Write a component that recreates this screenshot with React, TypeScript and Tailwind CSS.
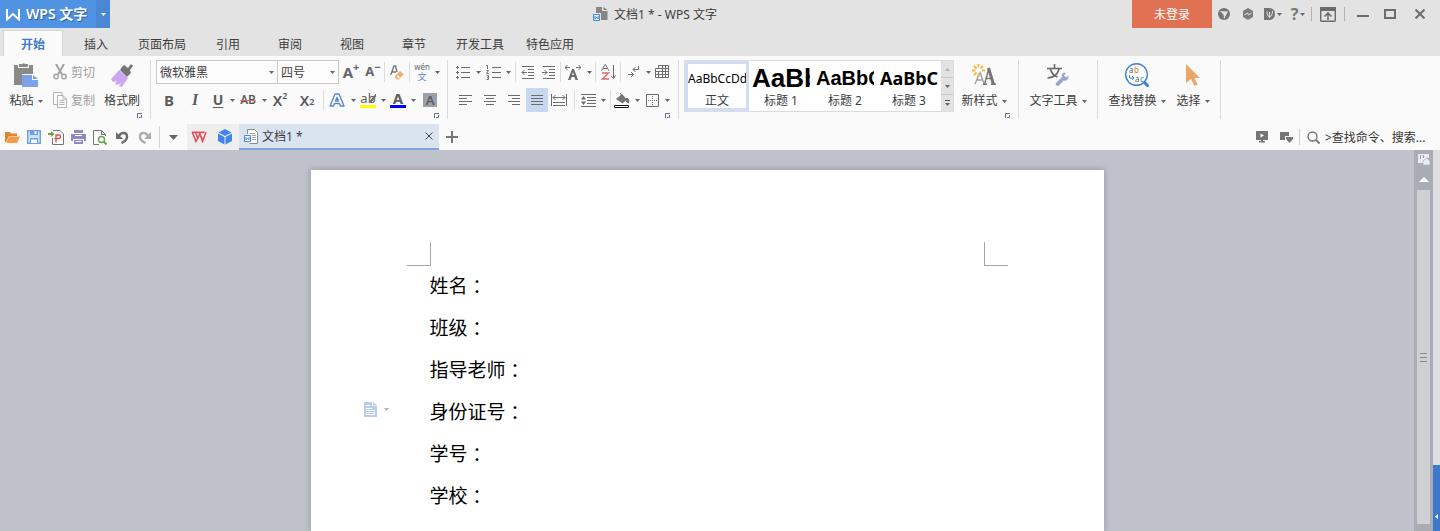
import React from 'react';
import clsx from 'clsx';

type IconProps = { w: number; h: number; children: React.ReactNode };

const Icon: React.FC<IconProps> = ({ w, h, children }) => (
  <svg width={w} height={h} viewBox={`0 0 ${w} ${h}`} fill="none" className="block shrink-0" aria-hidden="true">
    {children}
  </svg>
);

const Caret: React.FC<{ className?: string }> = ({ className = 'text-[#666]' }) => (
  <svg width="5" height="3" viewBox="0 0 5 3" className={clsx('block shrink-0', className)} aria-hidden="true">
    <path d="M0 0h5L2.500 3z" fill="currentColor" />
  </svg>
);

type ToolProps = { label: string; className?: string; children: React.ReactNode };

const Tool: React.FC<ToolProps> = ({ label, className, children }) => (
  <button type="button" aria-label={label} className={clsx('flex h-6 shrink-0 items-center justify-center', className)}>
    {children}
  </button>
);

const Sep: React.FC<{ className?: string }> = ({ className = 'mx-px h-5 bg-[#dcdcdc]' }) => (
  <div className={clsx('w-px shrink-0', className)} />
);

const Launcher: React.FC = () => (
  <div className="flex h-[7px] items-center justify-end pr-2">
    <button type="button" aria-label="更多设置">
      <Icon w={5} h={5}>
        <path d="M.5 5V.5H5M2 4.500h2.500V2" stroke="#69708c" />
      </Icon>
    </button>
  </div>
);

const Group: React.FC<{ className?: string; launcher?: boolean; children: React.ReactNode }> = ({ className, launcher, children }) => (
  <section className={clsx('flex h-[59px] shrink-0 flex-col border-r border-[#dcdcdc]', className)}>
    <div className="h-[52px]">{children}</div>
    {launcher && <Launcher />}
  </section>
);

const BigTool: React.FC<{ label: string; caret?: boolean; className?: string; children: React.ReactNode }> = ({ label, caret, className, children }) => (
  <button type="button" className={clsx('flex h-[52px] shrink-0 flex-col items-center', className)}>
    <span className="flex h-[30px] items-center justify-center">{children}</span>
    <span className="flex h-[22px] items-center gap-1 whitespace-nowrap">
      {label}
      {caret && <Caret />}
    </span>
  </button>
);

/* ---------- title bar ---------- */

const TitleBar: React.FC = () => (
  <header className="flex h-7 items-start">
    <button type="button" className="flex h-7 w-24 items-center gap-1.5 bg-[#5093e2] pl-1.5 font-semibold text-white [text-shadow:1px_1px_1px_#2d62a8]">
      <Icon w={14} h={13}>
        <path d="M1 1v10.500L7 6l6 5.500V1" stroke="#fff" strokeWidth="2" />
      </Icon>
      <span className="text-sm leading-7 whitespace-nowrap">WPS 文字</span>
    </button>
    <button type="button" aria-label="应用菜单" className="flex h-7 w-3.5 items-center justify-center bg-[#4a88d4]">
      <Caret className="text-white" />
    </button>

    <div className="flex h-7 flex-1 items-center justify-center gap-1.5 pl-[68px]">
      <Icon w={15} h={14}>
        <path d="M3 0h6v4h5.500v9H8V6H3z" fill="#868686" />
        <path d="M10.500 0l4 3h-4z" fill="#868686" />
        <path d="M.5 7.500h6v6h-6z" fill="#dfeaf8" stroke="#4a8ad8" />
        <path d="M2 9v3l1.500-2L5 12V9" stroke="#4a8ad8" />
      </Icon>
      <h1 className="pt-0.5 whitespace-nowrap">文档1 * - WPS 文字</h1>
    </div>

    <button type="button" className="h-7 w-20 bg-[#e07253] pt-0.5 text-white">未登录</button>
    <div className="flex h-7 items-center">
      <Tool label="皮肤" className="w-6">
        <Icon w={12} h={12}>
          <circle cx="6" cy="6" r="6" fill="#757575" />
          <path d="M2 3l8 .5-4 7.500-.5-4.500z" fill="#e3e3e4" />
        </Icon>
      </Tool>
      <Tool label="同步" className="w-6">
        <Icon w={12} h={12}>
          <path d="M6 0l5 3v6l-5 3-5-3V3z" fill="#7c7c7c" />
          <path d="M2.500 7l3-2 1 2 3-2" stroke="#e3e3e4" />
        </Icon>
      </Tool>
      <Tool label="稻壳" className="w-[26px] gap-0.5">
        <Icon w={11} h={12}>
          <path d="M0 0h5c4 0 6 2.500 6 6s-2 6-6 6H0z" fill="#757575" />
          <path d="M5.500 10V4M3 3.500c0 3 1 4.500 2.500 6M8.500 3c0 3-1 5-3 6.500" stroke="#e3e3e4" />
        </Icon>
        <Caret />
      </Tool>
      <Tool label="帮助" className="w-6 gap-0.5">
        <span className="text-base font-bold text-[#757575]">?</span>
        <Caret />
      </Tool>
      <Sep className="mx-px h-3.5 bg-[#b4b4b4]" />
      <Tool label="折叠功能区" className="w-[30px]">
        <Icon w={16} h={15}>
          <rect x=".7" y=".7" width="14.600" height="13.600" rx="1" stroke="#6c6c6c" strokeWidth="1.400" />
          <path d="M0 0h16v4H0z" fill="#6c6c6c" />
          <path d="M8 13V6.500M4.500 9.500L8 6l3.500 3.500" stroke="#6c6c6c" strokeWidth="1.600" />
        </Icon>
      </Tool>
      <Sep className="mx-px h-3.5 bg-[#b4b4b4]" />
      <Tool label="最小化" className="w-[34px]">
        <Icon w={12} h={10}>
          <path d="M0 7h12" stroke="#6c6c6c" strokeWidth="2" />
        </Icon>
      </Tool>
      <Tool label="最大化" className="w-5">
        <Icon w={12} h={10}>
          <path d="M1 1h10v8H1z" stroke="#6c6c6c" strokeWidth="2" />
        </Icon>
      </Tool>
      <Tool label="关闭" className="w-10">
        <Icon w={10} h={10}>
          <path d="M.5.5l9 9M9.500.5l-9 9" stroke="#6c6c6c" strokeWidth="2" />
        </Icon>
      </Tool>
    </div>
  </header>
);

/* ---------- ribbon tabs ---------- */

const tabs = ['插入', '页面布局', '引用', '审阅', '视图', '章节', '开发工具', '特色应用'];

const RibbonTabs: React.FC = () => (
  <nav className="flex h-7 items-end pl-1">
    <button type="button" className="mr-0.5 -ml-px h-[26px] w-[60px] border border-b-0 border-[#d2d5da] bg-[#fafafa] pt-0.5 font-bold text-[#3c7bc8]">开始</button>
    {tabs.map((tab) => (
      <button key={tab} type="button" className={clsx('h-[22px]', tab.length > 2 ? 'w-[70px]' : 'w-[62px]')}>
        {tab}
      </button>
    ))}
  </nav>
);

/* ---------- ribbon groups ---------- */

const ClipboardGroup: React.FC = () => (
  <Group launcher className="w-[151px]">
    <div className="flex pl-2">
      <BigTool label="粘贴" caret className="w-9">
        <Icon w={26} h={24}>
          <path d="M1 2h4v3h11V2h4v9H9v11H1z" fill="#8a8a8a" />
          <path d="M6 1h3a2 2 0 013 0h3v3H6z" fill="#8a8a8a" />
          <path d="M9 12h10v5h6v7H9z" fill="#7ba1ea" />
          <path d="M20 12l5 4h-5z" fill="#7ba1ea" />
        </Icon>
      </BigTool>
      <div className="flex w-[60px] flex-col gap-1 pl-[9px] text-[#a0a0a0]">
        <button type="button" className="flex h-6 items-center gap-1 whitespace-nowrap">
          <Icon w={14} h={16}>
            <path d="M3 0l6 10.500M11 0L5 10.500" stroke="#a3a3a3" strokeWidth="2" />
            <circle cx="3" cy="12.500" r="2.200" stroke="#a3a3a3" strokeWidth="1.400" />
            <circle cx="11" cy="12.500" r="2.200" stroke="#a3a3a3" strokeWidth="1.400" />
          </Icon>
          <span className="pt-0.5">剪切</span>
        </button>
        <button type="button" className="flex h-6 items-center gap-1 whitespace-nowrap">
          <Icon w={14} h={16}>
            <path d="M4 12.500H.5V.5H9V3" stroke="#b4b4b4" />
            <path d="M4.500 3.500h5.500l3.500 3.500v8.500h-9z" stroke="#b4b4b4" />
            <path d="M10 3.500V7h3.500M6.500 8.500h5M6.500 10.500h5M6.500 12.500h5" stroke="#b4b4b4" />
          </Icon>
          <span className="pt-0.5">复制</span>
        </button>
      </div>
      <BigTool label="格式刷" className="w-9">
        <Icon w={24} h={24}>
          <path d="M12 4l2-2 4 3 3-4 2 2-3 4 1 3-4 4-7-7z" fill="#757575" />
          <path d="M9 7l9 8-6 9-3-1 2-3-4 2-2-1 2-3-4 1-2-3z" fill="#cda8f2" />
        </Icon>
      </BigTool>
    </div>
  </Group>
);

const FontGroup: React.FC = () => (
  <Group launcher className="w-[297px]">
    <div className="flex flex-col gap-1 pl-[5px]">
      <div className="flex h-6 items-center">
        <div className="relative">
          <select aria-label="字体" defaultValue="微软雅黑" className="h-6 w-[122px] appearance-none border border-[#c9c9c9] bg-[#fcfcfc] pt-0.5 pl-[3px]">
            <option>微软雅黑</option>
          </select>
          <span className="pointer-events-none absolute inset-y-0 right-1 flex items-center"><Caret /></span>
        </div>
        <div className="relative -ml-px">
          <select aria-label="字号" defaultValue="四号" className="h-6 w-[62px] appearance-none border border-[#c9c9c9] bg-[#fcfcfc] pt-0.5 pl-[3px]">
            <option>四号</option>
          </select>
          <span className="pointer-events-none absolute inset-y-0 right-1 flex items-center"><Caret /></span>
        </div>
        <Tool label="增大字号" className="w-6 font-bold text-[#666]">
          <span className="text-[15px]">A</span><sup className="text-[11px]">+</sup>
        </Tool>
        <Tool label="减小字号" className="w-5 font-bold text-[#666]">
          <span className="text-[13px]">A</span><sup className="text-[11px]">−</sup>
        </Tool>
        <Sep />
        <Tool label="清除格式" className="w-[22px]">
          <Icon w={14} h={15}>
            <path d="M.7 10L4 1h1.500L7 7M2 7h4" stroke="#757575" strokeWidth="1.400" />
            <path d="M5 11l5-5 3.500 3.500-5 5H7L5 12.500z" fill="#f0ab66" />
            <path d="M6.500 11.500L8 10l2 2-1.500 1.500z" fill="#fff" />
          </Icon>
        </Tool>
        <Sep />
        <Tool label="拼音指南" className="w-[22px] flex-col">
          <span className="text-[8px] leading-[9px] text-[#666]">wén</span>
          <span className="text-[9px] leading-[11px] text-[#5a8ad0]">文</span>
        </Tool>
        <Tool label="拼音选项" className="w-2"><Caret /></Tool>
      </div>
      <div className="flex h-6 items-center text-[#5c5c5c]">
        <Tool label="加粗" className="w-[26px] text-[15px] font-bold">B</Tool>
        <Tool label="倾斜" className="w-[26px] font-['Liberation_Serif',serif] text-base font-bold italic">I</Tool>
        <Tool label="下划线" className="w-5 text-sm font-bold underline underline-offset-2">U</Tool>
        <Tool label="下划线样式" className="w-2"><Caret /></Tool>
        <Tool label="删除线" className="w-6 font-[Roboto,sans-serif] font-medium text-[#555] line-through decoration-[#e46a66] decoration-1">AB</Tool>
        <Tool label="删除线样式" className="w-2"><Caret /></Tool>
        <Tool label="上标" className="w-6 text-[15px] font-semibold">X<sup className="text-[9px]">2</sup></Tool>
        <Tool label="下标" className="w-[30px] text-[15px] font-semibold">X<sub className="text-[9px]">2</sub></Tool>
        <Sep />
        <Tool label="文字效果" className="w-6">
          <Icon w={16} h={14}>
            <path d="M1 13L6 1h4l5 12h-3.500l-1-2.500h-5l-1 2.500zM6.500 8h3L8 4.500z" stroke="#5c86d2" strokeWidth="1.400" strokeLinejoin="round" />
          </Icon>
        </Tool>
        <Tool label="文字效果选项" className="w-2"><Caret /></Tool>
        <Tool label="突出显示" className="w-[22px]">
          <span className="relative flex h-4 w-4 flex-col justify-between">
            <span className="text-[13px] leading-3">ab</span>
            <span className="block h-[3px] bg-[#ffff00]" />
            <span className="absolute top-0 left-2">
              <Icon w={9} h={12}>
                <path d="M8 2L3 8l-1 2 2-1 4-5" fill="#6c6c6c" stroke="#6c6c6c" />
              </Icon>
            </span>
          </span>
        </Tool>
        <Tool label="突出显示颜色" className="w-2"><Caret /></Tool>
        <Tool label="字体颜色" className="w-[22px]">
          <span className="flex h-4 w-4 flex-col items-center justify-between">
            <span className="text-[15px] leading-3 font-bold">A</span>
            <span className="block h-[3px] w-full bg-[#0000ff]" />
          </span>
        </Tool>
        <Tool label="字体颜色选项" className="w-2"><Caret /></Tool>
        <Tool label="字符底纹" className="w-[26px]">
          <span className="h-3.5 w-3.5 bg-[#9aa0aa] text-center text-[13px] leading-3.5 font-semibold">A</span>
        </Tool>
      </div>
    </div>
  </Group>
);

const Lines: React.FC<{ d: string }> = ({ d }) => (
  <Icon w={14} h={13}>
    <path d={d} stroke="#6c6c6c" />
  </Icon>
);

const ParagraphGroup: React.FC = () => (
  <Group launcher className="w-[231px]">
    <div className="flex flex-col gap-1 pl-1.5">
      <div className="flex h-6 items-center">
        <Tool label="项目符号" className="w-[18px]">
          <Lines d="M5 1.500h9M5 6.500h9M5 11.500h9M0 1.500h3M0 6.500h3M0 11.500h3M1.500 0v3M1.500 5v3M1.500 10v3" />
        </Tool>
        <Tool label="项目符号样式" className="w-3"><Caret /></Tool>
        <Tool label="编号" className="w-[18px]">
          <Icon w={15} h={15}>
            <path d="M6 2.500h9M6 7.500h9M6 12.500h9" stroke="#6c6c6c" />
            <path d="M0 .5h1.500V4M.5 5.500h2L.5 8.500h2.500M.5 10.500h2v4h-2M1 12.500h1.500" stroke="#6c6c6c" />
          </Icon>
        </Tool>
        <Tool label="编号样式" className="w-3"><Caret /></Tool>
        <Sep />
        <Tool label="减少缩进" className="w-[22px]">
          <Lines d="M1 .5h12M7 3.500h6M7 6.500h6M7 9.500h6M1 12.500h12M1 6.500h5M3.500 4L1 6.500 3.500 9" />
        </Tool>
        <Tool label="增加缩进" className="w-5">
          <Lines d="M1 .5h12M7 3.500h6M7 6.500h6M7 9.500h6M1 12.500h12M0 6.500h5M2.500 4L5 6.500 2.500 9" />
        </Tool>
        <Sep />
        <Tool label="中文版式" className="w-[22px]">
          <Icon w={16} h={15}>
            <path d="M3 15L7 4h2l4 11h-2.500l-1-3h-3l-1 3zM7 10h2L8 7z" fill="#6c6c6c" />
            <path d="M0 2.500h5M2.500 0L0 2.500 2.500 5M11 2.500h5M13.500 0L16 2.500 13.500 5" stroke="#6c6c6c" />
          </Icon>
        </Tool>
        <Tool label="中文版式选项" className="w-2.5"><Caret /></Tool>
        <Sep />
        <Tool label="排序" className="w-[22px]">
          <Icon w={15} h={16}>
            <path d="M.5 7L4 .5h.5L8 7M2 4.500h5" stroke="#757575" />
            <path d="M1 9h6.500L1.500 15H8" stroke="#e46a66" strokeWidth="1.400" />
            <path d="M12.500 1v13M10 11.500l2.500 3 2-3" stroke="#6c6c6c" />
          </Icon>
        </Tool>
        <Sep />
        <Tool label="显示编辑标记" className="w-[22px]">
          <Icon w={11} h={13}>
            <path d="M10.500 0v3.500H5M7.500 1L5 3.500 7.500 6M0 8.500h5M3 6l2.500 2.500L3 11" stroke="#6c6c6c" />
          </Icon>
        </Tool>
        <Tool label="编辑标记选项" className="w-2"><Caret /></Tool>
        <Tool label="插入表格" className="w-5">
          <Icon w={14} h={14}>
            <path d="M3.500 1V.5h10v12H.5V3.500h13M3.500.5v3M.5 6.500h13M.5 9.500h13M3.500 6v7M7.500.5v12M10.500.5v12" stroke="#6c6c6c" />
          </Icon>
        </Tool>
      </div>
      <div className="flex h-6 items-center">
        <Tool label="左对齐" className="w-6"><Lines d="M0 1.500h13M0 4.500h8M0 7.500h13M0 10.500h8" /></Tool>
        <Tool label="居中" className="w-6"><Lines d="M1 1.500h12M3 4.500h8M1 7.500h12M3 10.500h8" /></Tool>
        <Tool label="右对齐" className="w-6"><Lines d="M1 1.500h12M5 4.500h8M1 7.500h12M5 10.500h8" /></Tool>
        <Tool label="两端对齐" className="w-[22px] bg-[#c7d9f0]"><Lines d="M1 1.500h12M1 4.500h12M1 7.500h12M1 10.500h12" /></Tool>
        <Tool label="分散对齐" className="w-[22px]">
          <Icon w={16} h={13}>
            <path d="M.5 0v12M15.500 0v12M2 3.500h12M4.500 1L2 3.500 4.500 6M11.500 1L14 3.500 11.500 6M2 8.500h12M2 11.500h12" stroke="#6c6c6c" />
          </Icon>
        </Tool>
        <Sep className="mx-1 h-5 bg-[#dcdcdc]" />
        <Tool label="行距" className="w-[18px]">
          <Icon w={15} h={13}>
            <path d="M0 .5h15M6 3.500h9M6 6.500h9M6 9.500h9M0 12.500h15" stroke="#6c6c6c" />
            <path d="M0 5.500h5L2.500 2zM0 7.500h5L2.500 11z" fill="#6c6c6c" />
          </Icon>
        </Tool>
        <Tool label="行距选项" className="w-3"><Caret /></Tool>
        <Sep />
        <Tool label="底纹颜色" className="w-5">
          <Icon w={16} h={15}>
            <path d="M2 6l6-5 5 5.500-4.500 4z" fill="#757575" />
            <path d="M6 0l3 4M13 5c2 1.500 2 4 1.500 5C13 9.500 12 8 12 6.500z" fill="#6c6c6c" stroke="#6c6c6c" />
            <path d="M.5 12.500h14v2H.5z" fill="#fff" stroke="#111" />
          </Icon>
        </Tool>
        <Tool label="底纹选项" className="w-2.5"><Caret /></Tool>
        <Tool label="边框" className="w-5">
          <Icon w={13} h={13}>
            <path d="M.5 1V.5h12v12H.5z" stroke="#6c6c6c" />
            <path d="M6.500 2v9M2 6.500h9" stroke="#6c6c6c" strokeDasharray="1 1" />
          </Icon>
        </Tool>
        <Tool label="边框选项" className="w-2.5"><Caret /></Tool>
      </div>
    </div>
  </Group>
);

const styles = [
  { name: '标题 1', sample: 'AaBb', className: "font-['Liberation_Sans',sans-serif] text-[26px]" },
  { name: '标题 2', sample: 'AaBbC', className: "font-['Liberation_Sans',sans-serif] text-xl" },
  { name: '标题 3', sample: 'AaBbC', className: 'text-lg' },
];

const StylesGroup: React.FC = () => (
  <Group launcher className="w-[340px]">
    <div className="flex pl-[5px]">
      <div className="flex h-[52px] w-[270px] border border-[#dcdcdc] bg-white">
        <button type="button" className="flex w-16 shrink-0 flex-col overflow-hidden border-3 border-[#d0ddf4]">
          <span className="flex h-[26px] items-center pt-1 text-xs text-black">AaBbCcDd</span>
          <span className="h-[18px] w-full leading-[22px]">正文</span>
        </button>
        {styles.map((style) => (
          <button key={style.name} type="button" className="flex w-16 shrink-0 flex-col px-[3px] pt-[3px]">
            <span className={clsx('flex h-7 w-full items-center overflow-hidden font-bold text-black', style.className)}>{style.sample}</span>
            <span className="h-[18px] w-full leading-[18px]">{style.name}</span>
          </button>
        ))}
        <div className="flex flex-1 flex-col gap-px bg-[#c8c8c8]">
          <button type="button" aria-label="上一行" className="flex flex-1 items-center justify-center bg-[#e2e2e2]">
            <Caret className="rotate-180 text-[#b4b4b4]" />
          </button>
          <button type="button" aria-label="下一行" className="flex flex-1 items-center justify-center bg-[#e2e2e2]"><Caret /></button>
          <button type="button" aria-label="全部样式" className="flex flex-1 flex-col items-center justify-center gap-0.5 bg-[#e2e2e2]">
            <span className="h-px w-[5px] bg-[#555]" />
            <Caret />
          </button>
        </div>
      </div>
      <BigTool label="新样式" caret className="w-[60px]">
        <Icon w={24} h={22}>
          <path d="M3 20l5-12 4 12M5 16h5" stroke="#a0a0a0" strokeWidth="1.400" />
          <path d="M11 20.300h4M19 20.300h5" stroke="#757575" strokeWidth="1.400" />
          <path d="M12.500 20.500L17 4" stroke="#757575" strokeWidth="1.400" />
          <path d="M16.500 4l5 16.500" stroke="#757575" strokeWidth="3" />
          <path d="M13.500 14.500h6" stroke="#757575" strokeWidth="1.400" />
          <path d="M6.500 0v3.500M6.500 10v3M0 6.500h3.500M10 6.500h3M2 2l2.500 2.500M11 2L8.500 4.500M2 11l2.500-2.500" stroke="#f4b942" strokeWidth="2" />
          <circle cx="6.500" cy="6.500" r="2.200" fill="#fff" />
        </Icon>
      </BigTool>
    </div>
  </Group>
);

const TextToolsGroup: React.FC = () => (
  <Group className="w-[79px]">
    <BigTool label="文字工具" caret className="w-full">
      <Icon w={22} h={22}>
        <path d="M0 4.500h15M7.500 0v4M3.500 5c1 5 4 7 7 8M12 5c-1 5-5 8.500-11.500 9" stroke="#666" strokeWidth="1.600" />
        <path d="M9 19l6-6c-1-3 1-5 4-4l-2 2.500 2 2 2.500-2c.5 3.500-2 6-5 5L12 21.500c-2 1-4-.5-3-2.500z" fill="#97a5d0" />
      </Icon>
    </BigTool>
  </Group>
);

const EditGroup: React.FC = () => (
  <Group className="w-[123px]">
    <div className="flex pl-[9px]">
      <BigTool label="查找替换" caret className="w-[60px]">
        <svg width="24" height="24" viewBox="0 0 24 24" className="block" aria-hidden="true">
          <circle cx="11.500" cy="11.500" r="10.800" fill="#fff" stroke="#3b82dc" strokeWidth="1.400" />
          <path d="M19 19l4.500 4.500" stroke="#3b82dc" strokeWidth="3" />
          <text x="4" y="10" fontSize="8" fill="#555">a</text>
          <text x="9" y="10" fontSize="8" fill="#d87c2c">b</text>
          <text x="10" y="19" fontSize="8" fill="#555">a</text>
          <text x="15" y="19" fontSize="8" fill="#3b82dc">c</text>
          <path d="M4.500 12v3H9M7 13l2 2-2 2" fill="none" stroke="#3b82dc" />
        </svg>
      </BigTool>
      <BigTool label="选择" caret className="ml-1.5 w-10">
        <Icon w={14} h={22}>
          <path d="M0 0l14 14H8.500l3 6.500-3 1.500-3.500-7L0 19z" fill="#eda566" />
        </Icon>
      </BigTool>
    </div>
  </Group>
);

/* ---------- quick access and document tabs ---------- */

const DocumentBar: React.FC = () => (
  <div className="flex h-[26px] items-center justify-between bg-[#fafafa]">
    <div className="flex h-full items-center">
      <div className="flex items-center pl-px">
        <Tool label="打开" className="w-[22px]">
          <Icon w={15} h={12}>
            <path d="M0 11V1h5l1 1.500h6V5H4L1 11z" fill="#e8812b" />
            <path d="M4 5.500h11L12 12H1z" fill="#f29d4b" />
          </Icon>
        </Tool>
        <Tool label="保存" className="w-[22px]">
          <Icon w={14} h={14}>
            <path d="M.7.7h12.600v12.600H.7z" fill="#cfe0fa" stroke="#6f9fe8" strokeWidth="1.400" />
            <path d="M3 0h8v5H3zM3 8h8v6H3z" fill="#6f9fe8" />
            <path d="M7.500 1h2v3h-2zM4 9.500h6V13H4z" fill="#fff" />
          </Icon>
        </Tool>
        <Tool label="输出为PDF" className="w-[22px]">
          <Icon w={16} h={15}>
            <path d="M5 .5h7l3.500 3.500v10.500h-11V8" stroke="#757575" />
            <path d="M8 12.500V5h3c2 0 2 3.500 0 3.500H6.500" stroke="#d9534f" strokeWidth="1.300" />
            <path d="M0 3h3V1l3.500 3L3 7V5H0z" fill="#5fa84a" />
          </Icon>
        </Tool>
        <Tool label="打印" className="w-[22px]">
          <Icon w={15} h={14}>
            <path d="M3 0h9v3H3zM0 4h15v7h-2V9H2v2H0zM3 10h9v4H3z" fill="#8d8ac4" />
            <path d="M4.500 11.500h6M4 5.500h7" stroke="#fff" />
          </Icon>
        </Tool>
        <Tool label="打印预览" className="w-[22px]">
          <Icon w={14} h={15}>
            <path d="M6 14.500H.5V.5h8l4 4V6M8.500.5v4h4" stroke="#757575" />
            <circle cx="8.500" cy="9.500" r="3" stroke="#5fa84a" strokeWidth="1.400" />
            <path d="M10.500 11.500l3 3" stroke="#5fa84a" strokeWidth="2" />
          </Icon>
        </Tool>
        <Tool label="撤销" className="w-[22px]">
          <Icon w={13} h={13}>
            <path d="M3 5C5 1 11 1 11 5.500 11 9 8 11 5.500 12" stroke="#6c6c6c" strokeWidth="2.400" />
            <path d="M0 1v7h7z" fill="#6c6c6c" />
          </Icon>
        </Tool>
        <Tool label="恢复" className="w-[22px]">
          <Icon w={13} h={13}>
            <path d="M10 5C8 1 2 1 2 5.500 2 9 5 11 7.500 12" stroke="#adadad" strokeWidth="2.400" />
            <path d="M13 1v7H6z" fill="#adadad" />
          </Icon>
        </Tool>
      </div>
      <Sep className="ml-1 h-[22px] bg-[#d4d4d4]" />
      <Tool label="自定义快速访问" className="w-[27px]">
        <Icon w={9} h={5}>
          <path d="M0 0h9L4.500 5z" fill="#666" />
        </Icon>
      </Tool>
      <div className="flex h-full items-center bg-[#eeeeef]">
        <Tool label="WPS首页" className="w-6">
          <Icon w={16} h={12}>
            <path d="M1 1.200h12.500M1.200 1l3.800 9.500L9 3l2.500 7.500L15 1M4.500 1.500L7 7.500M8 1.500l3.500 7" stroke="#f0494d" strokeWidth="1.500" />
          </Icon>
        </Tool>
        <Tool label="云文档" className="w-7">
          <Icon w={14} h={16}>
            <path d="M7 0l6.500 3.500L7 7 .5 3.500zM0 4.500L6.500 8v7.500L0 12zM14 4.500L7.500 8v7.500L14 12z" fill="#3f86ec" />
          </Icon>
        </Tool>
      </div>
      <div className="flex h-full w-[200px] items-center border-b-2 border-[#7ea5db] bg-[#dae4f1] pr-1.5 pl-[5px]">
        <Icon w={14} h={15}>
          <path d="M3.500 5V.5h7l3 3v11h-8" fill="#fff" stroke="#8a8a8a" />
          <path d="M6 4.500h5M8 6.500h4M8 8.500h4M8 10.500h4" stroke="#a0a0a0" />
          <path d="M.5 6.500h6v6h-6z" fill="#fff" stroke="#4a8ad8" />
          <path d="M2 8v3l1.500-2L5 11V8" stroke="#4a8ad8" />
        </Icon>
        <a href="#document" className="flex-1 pt-0.5 pl-1">文档1 *</a>
        <button type="button" aria-label="关闭文档">
          <Icon w={8} h={8}>
            <path d="M.5.5l7 7M7.500.5l-7 7" stroke="#444" />
          </Icon>
        </button>
      </div>
      <Tool label="新建文档" className="w-[26px]">
        <Icon w={12} h={12}>
          <path d="M6 0v12M0 6h12" stroke="#777" strokeWidth="2" />
        </Icon>
      </Tool>
    </div>

    <div className="flex items-center pr-3">
      <Tool label="演示" className="w-6">
        <Icon w={12} h={12}>
          <path d="M0 0h12v9H7v1h2v1.500H3V10h2V9H0z" fill="#757575" />
          <path d="M4.500 2.500v4l3.500-2z" fill="#fff" />
        </Icon>
      </Tool>
      <Tool label="切换窗口" className="w-6">
        <Icon w={13} h={11}>
          <path d="M0 0h9v4H5v4H0zM6 5h7v2L9.500 11 6 7z" fill="#757575" />
        </Icon>
      </Tool>
      <Sep className="mx-px h-4 bg-[#cfcfcf]" />
      <label htmlFor="command-search" className="flex w-6 justify-center">
        <Icon w={13} h={13}>
          <circle cx="5.500" cy="5.500" r="4.500" stroke="#777" strokeWidth="1.400" />
          <path d="M9 9l3.500 3.500" stroke="#777" strokeWidth="2" />
        </Icon>
      </label>
      <input id="command-search" type="text" aria-label="查找命令" placeholder=">查找命令、搜索..." className="w-[103px] bg-transparent pt-0.5 placeholder:text-[#333]" />
    </div>
  </div>
);

/* ---------- workspace ---------- */

const fields = ['姓名', '班级', '指导老师', '身份证号', '学号', '学校'];

const Page: React.FC = () => (
  <article
    id="document"
    className="mx-auto mt-5 w-[793px] grow bg-white pt-[72px] shadow-[0_0_6px_1px_#9c9ead]"
  >
    <div className="flex justify-between px-24">
      <div className="h-6 w-6 border-r border-b border-[#a6a6a6]" />
      <div className="h-6 w-6 border-b border-l border-[#a6a6a6]" />
    </div>
    <div className="px-[119px] text-[19px] leading-10 text-black">
      {fields.map((field) => (
        <p key={field} className="relative flex h-[42px] items-start">
          {field}
          <span className="font-['Noto_Sans_CJK_TC',sans-serif]">：</span>
          {field === '身份证号' && (
            <button type="button" aria-label="段落布局" className="absolute top-2.5 -left-[66px] flex items-center gap-1.5">
              <Icon w={14} h={15}>
                <path d="M0 0h8v4h5v11H0z" fill="#b9cceb" />
                <path d="M9 0l4 3.500H9z" fill="#b9cceb" />
                <path d="M2 3.500h4M2 6.500h6M2 8.500h9M2.500 10.500h8v2h-8z" stroke="#fff" />
              </Icon>
              <Caret className="text-[#b0b0b0]" />
            </button>
          )}
        </p>
      ))}
    </div>
  </article>
);

const ScrollBar: React.FC = () => (
  <div className="flex w-[19px] shrink-0 flex-col items-center bg-[#a9abb5] pb-[7px]">
    <button type="button" aria-label="选择浏览对象" className="flex h-[18px] items-center">
      <Icon w={12} h={11}>
        <path d="M0 0h11v4H9L5 7v2H0z" fill="#ececf0" />
        <path d="M2.500 1v4M5.500 1v3" stroke="#9a9ca6" />
        <path d="M8.500 4L12 7v4H5V7z" fill="#ececf0" stroke="#9a9ca6" strokeWidth=".5" />
      </Icon>
    </button>
    <button type="button" aria-label="向上滚动" className="flex h-[22px] items-center">
      <Icon w={10} h={5}>
        <path d="M0 5h10L5 0z" fill="#fff" />
      </Icon>
    </button>
    <div className="flex w-[13px] grow flex-col items-center justify-center gap-[3px] bg-[#cfd0d4]">
      <span className="h-px w-[7px] bg-[#888]" />
      <span className="h-px w-[7px] bg-[#888]" />
      <span className="h-px w-[7px] bg-[#888]" />
    </div>
  </div>
);

const App: React.FC = () => (
  <div className="flex h-screen flex-col overflow-hidden bg-[#e3e3e4] font-['Noto_Sans','Noto_Sans_CJK_SC',sans-serif] text-xs text-[#3c3c3c]">
    <TitleBar />
    <RibbonTabs />
    <div className="flex h-[68px] shrink-0 overflow-hidden bg-[#fafafa] pt-1">
      <ClipboardGroup />
      <FontGroup />
      <ParagraphGroup />
      <StylesGroup />
      <TextToolsGroup />
      <EditGroup />
    </div>
    <DocumentBar />
    <div className="flex min-h-0 flex-1">
      <main className="flex min-w-0 flex-1 flex-col overflow-hidden bg-[#bfc2cb]">
        <Page />
      </main>
      <ScrollBar />
      <aside className="flex w-[7px] shrink-0 flex-col justify-end bg-[#dedee0]">
        <button type="button" aria-label="展开任务窗格" className="flex h-[66px] items-end justify-center bg-[#3d79cb] pb-3">
          <Icon w={3} h={5}>
            <path d="M3 0v5L0 2.500z" fill="#fff" />
          </Icon>
        </button>
      </aside>
    </div>
  </div>
);

export default App;
